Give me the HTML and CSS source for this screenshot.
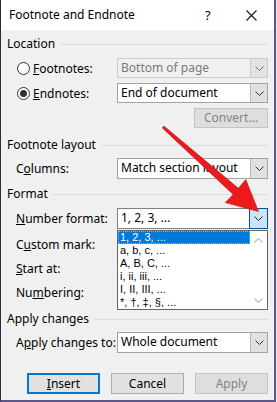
FILE: index.html
```html
<!DOCTYPE html>
<html>
<head>
<meta charset="utf-8">
<link rel="stylesheet" href="styles.css">
</head>
<body>
<div class="dialog">
  <div class="titlebar">
    <span class="title">Footnote and Endnote</span>
    <span class="help">?</span>
    <span class="close"><svg width="11" height="11" viewBox="0 0 11 11"><path d="M0.5 0.5 L10.5 10.5 M10.5 0.5 L0.5 10.5" stroke="#1a1a1a" stroke-width="1.1" fill="none"/></svg></span>
  </div>
  <div class="content">
    <div class="group-head"><span>Location</span><i class="rule"></i></div>
    <div class="row">
      <label class="radio"><span class="circle"></span><span><u>F</u>ootnotes:</span></label>
      <div class="combo disabled"><span class="val">Bottom of page</span><span class="drop"><svg width="9" height="5" viewBox="0 0 9 5"><path d="M0.5 0.5 L4.5 4.5 L8.5 0.5" stroke="#6a6a6a" fill="none"/></svg></span></div>
    </div>
    <div class="row">
      <label class="radio"><span class="circle checked"></span><span><u>E</u>ndnotes:</span></label>
      <div class="combo"><span class="val">End of document</span><span class="drop"><svg width="9" height="5" viewBox="0 0 9 5"><path d="M0.5 0.5 L4.5 4.5 L8.5 0.5" stroke="#333" fill="none"/></svg></span></div>
    </div>
    <div class="row end">
      <button class="btn disabled">Convert...</button>
    </div>

    <div class="group-head gap-lg"><span>Footnote layout</span><i class="rule"></i></div>
    <div class="row tall">
      <span class="label">C<u>o</u>lumns:</span>
      <div class="combo"><span class="val">Match section layout</span><span class="drop"><svg width="9" height="5" viewBox="0 0 9 5"><path d="M0.5 0.5 L4.5 4.5 L8.5 0.5" stroke="#333" fill="none"/></svg></span></div>
    </div>

    <div class="group-head gap-md"><span>Format</span><i class="rule"></i></div>
    <div class="row tall">
      <span class="label"><u>N</u>umber format:</span>
      <div class="combo focus"><span class="val">1, 2, 3, ...</span><span class="drop"><svg width="9" height="5" viewBox="0 0 9 5"><path d="M0.5 0.5 L4.5 4.5 L8.5 0.5" stroke="#222" fill="none"/></svg></span></div>
    </div>
    <div class="row tall sub"><span class="label">C<u>u</u>stom mark:</span></div>
    <div class="row tall sub"><span class="label"><u>S</u>tart at:</span></div>
    <div class="row tall sub"><span class="label">Nu<u>m</u>bering:</span></div>

    <div class="group-head gap-md2"><span>Apply changes</span><i class="rule"></i></div>
    <div class="row tall">
      <span class="label">A<u>p</u>ply changes to:</span>
      <div class="combo"><span class="val">Whole document</span><span class="drop"><svg width="9" height="5" viewBox="0 0 9 5"><path d="M0.5 0.5 L4.5 4.5 L8.5 0.5" stroke="#333" fill="none"/></svg></span></div>
    </div>

    <div class="buttons">
      <button class="btn default"><u>I</u>nsert</button>
      <button class="btn">Cancel</button>
      <button class="btn disabled">Apply</button>
    </div>
  </div>

  <div class="listbox">
    <ul class="items">
      <li class="selected">1, 2, 3, ...</li>
      <li>a, b, c, ...</li>
      <li>A, B, C, ...</li>
      <li>i, ii, iii, ...</li>
      <li>I, II, III, ...</li>
      <li>*, †, ‡, §, ...</li>
    </ul>
    <div class="scrollbar">
      <svg width="9" height="5" viewBox="0 0 9 5"><path d="M0.5 4.5 L4.5 0.5 L8.5 4.5" stroke="#c2c2c2" stroke-width="1.3" fill="none"/></svg>
      <svg width="9" height="5" viewBox="0 0 9 5"><path d="M0.5 0.5 L4.5 4.5 L8.5 0.5" stroke="#c2c2c2" stroke-width="1.3" fill="none"/></svg>
    </div>
  </div>

  <svg class="arrow" width="277" height="402" viewBox="0 0 277 402">
    <polygon points="162.3,127.9 163.9,126.1 238.4,188.3 245.8,179.6 258.5,211.5 225.3,202.6 233.2,194.4" fill="#ec1a1d" stroke="#c50f12" stroke-width="0.6" stroke-linejoin="round"/>
  </svg>
</div>
</body>
</html>
```
FILE: styles.css
```css
html, body {
  margin: 0;
  padding: 0;
  background: #e6e6ec;
}
body {
  font-family: "Noto Sans", "Open Sans", sans-serif;
  font-size: 12px;
  color: #000;
}
.dialog {
  position: relative;
  width: 276px;
  height: 402px;
  box-sizing: border-box;
  background: #f0f0f0;
  border-left: 1px solid #2d2a3d;
  border-right: 2px solid #5c5786;
  border-bottom: 2px solid #5c5786;
  overflow: hidden;
}
.titlebar {
  height: 30px;
  background: #fff;
  display: flex;
  align-items: center;
  padding-left: 8px;
}
.title {
  font-size: 12px;
  flex: 1;
  padding-bottom: 1px;
}
.help {
  font-size: 13px;
  width: 12px;
  margin-right: 29px;
  padding-bottom: 1px;
}
.close {
  width: 11px;
  height: 11px;
  margin-right: 17px;
  display: flex;
}
.content {
  padding: 0 6px 0 6px;
}
.group-head {
  display: flex;
  align-items: center;
  height: 16px;
  margin-top: 6px;
  margin-bottom: 6px;
}
.group-head span {
  line-height: 16px;
  margin-right: 5px;
}
.group-head .rule {
  flex: 1;
  height: 1px;
  background: #dcdcdc;
}
.gap-lg { margin-top: 9px; margin-bottom: 5px; }
.gap-md { margin-top: 7px; margin-bottom: 6px; }
.gap-md2 { margin-top: 8px; margin-bottom: 5px; }
.row {
  display: flex;
  align-items: center;
  height: 20px;
  padding-left: 9px;
  margin-bottom: 5px;
}
.row.tall { height: 21px; }
.row.sub { margin-bottom: 3px; margin-top: 0; }
.row.end { justify-content: flex-end; }
.label, .radio {
  width: 101px;
  flex: none;
  display: flex;
  align-items: center;
}
.label { display: block; }
.radio .circle {
  width: 13px;
  height: 13px;
  box-sizing: border-box;
  border: 1px solid #333;
  border-radius: 50%;
  background: #fff;
  margin-left: 1px;
  margin-right: 3px;
  display: flex;
  align-items: center;
  justify-content: center;
}
.radio .circle.checked::after {
  content: "";
  width: 7px;
  height: 7px;
  border-radius: 50%;
  background: #333;
}
.combo {
  flex: 1;
  height: 100%;
  box-sizing: border-box;
  display: flex;
  border: 1px solid #a3a3a3;
  background: #fff;
}
.combo .val {
  flex: 1;
  padding-left: 3px;
  line-height: 18px;
}
.combo .drop {
  width: 16px;
  flex: none;
  background: #e1e1e1;
  border-left: 1px solid #b9b9b9;
  display: flex;
  align-items: center;
  justify-content: center;
}
.combo.disabled {
  background: #f0f0f0;
  border-color: #cccccc;
  color: #7a7a7a;
}
.combo.disabled .drop {
  background: #e3e3e3;
  border-left-color: #cccccc;
}
.combo.focus {
  border-color: #7a8290;
}
.combo.focus .drop {
  background: #cce4f7;
  border: 1px solid #005499;
  margin: -1px -1px -1px 0;
  width: 17px;
}
.btn {
  font-family: inherit;
  font-size: 12px;
  width: 73px;
  height: 21px;
  box-sizing: border-box;
  background: #e1e1e1;
  border: 1px solid #adadad;
  color: #000;
  padding: 0;
  line-height: 18px;
}
.btn.disabled {
  background: #dedede;
  border-color: #c4c4c4;
  color: #838383;
}
.row.end .btn {
  width: 74px;
  height: 20px;
}
.btn.default {
  border: 2px solid #0078d7;
}
.buttons {
  display: flex;
  justify-content: flex-end;
  gap: 11px;
  margin-top: 20px;
}
.listbox {
  position: absolute;
  left: 116px;
  top: 230px;
  width: 151px;
  height: 80px;
  box-sizing: border-box;
  border: 1px solid #646464;
  background: #fff;
  display: flex;
}
.items {
  list-style: none;
  margin: 0;
  padding: 0;
  flex: 1;
  font-family: "Liberation Sans", Arial, sans-serif;
  font-size: 11px;
}
.items li {
  height: 13px;
  line-height: 13px;
  padding-left: 2px;
  white-space: nowrap;
  box-sizing: border-box;
}
.items li.selected {
  background: #0078d7;
  color: #fff;
  outline: 1px dotted #f2a64a;
  outline-offset: -1px;
}
.scrollbar {
  width: 17px;
  flex: none;
  display: flex;
  flex-direction: column;
  align-items: center;
  justify-content: space-between;
  padding: 7px 0 6px;
  box-sizing: border-box;
}
.arrow {
  position: absolute;
  left: -1px;
  top: 0;
  pointer-events: none;
}
```
